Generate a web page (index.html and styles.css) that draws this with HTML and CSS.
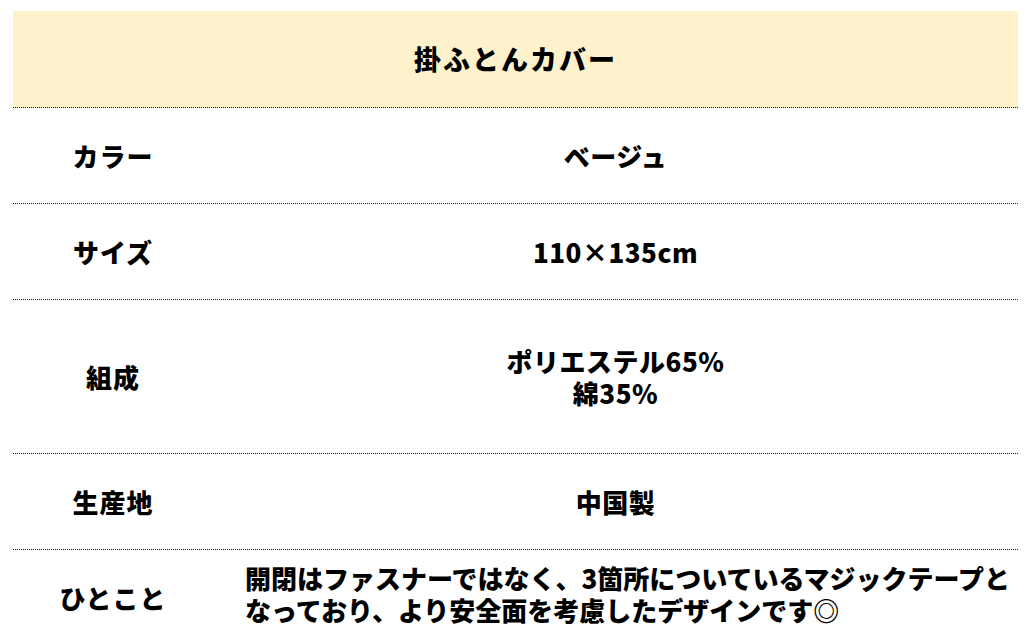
FILE: index.html
```html
<!DOCTYPE html>
<html lang="ja">
<head>
<meta charset="utf-8">
<title>掛ふとんカバー</title>
<link rel="stylesheet" href="styles.css">
</head>
<body>
<div class="page">
  <div class="spec">
    <div class="spec-head">掛ふとんカバー</div>
    <div class="spec-row">
      <div class="spec-label">カラー</div>
      <div class="spec-value">ベージュ</div>
    </div>
    <div class="spec-row">
      <div class="spec-label">サイズ</div>
      <div class="spec-value">110×135cm</div>
    </div>
    <div class="spec-row spec-row-tall">
      <div class="spec-label">組成</div>
      <div class="spec-value">ポリエステル65%<br>綿35%</div>
    </div>
    <div class="spec-row">
      <div class="spec-label">生産地</div>
      <div class="spec-value">中国製</div>
    </div>
    <div class="spec-row spec-row-last">
      <div class="spec-label">ひとこと</div>
      <div class="spec-value spec-value-left">開閉はファスナーではなく、3箇所についているマジックテープと<br>なっており、より安全面を考慮したデザインです◎</div>
    </div>
  </div>
</div>
</body>
</html>
```

FILE: styles.css
```css
html, body {
  margin: 0;
  padding: 0;
  background: #ffffff;
}

body {
  font-family: "Noto Sans CJK JP", "Noto Sans", sans-serif;
  font-weight: 900;
  color: #000000;
  font-size: 26px;
  line-height: 32px;
}

.page {
  padding: 11px 11px 0 13px;
}

.spec {
  width: 1005px;
}

.spec-head {
  background: #fef2cd;
  height: 96px;
  display: flex;
  align-items: center;
  justify-content: center;
  border-bottom: 1px dotted #1a1a1a;
  font-size: 27px;
  letter-spacing: 2px;
}

.spec-row {
  display: grid;
  grid-template-columns: 200px 1fr;
  min-height: 95px;
  border-bottom: 1px dotted #1a1a1a;
}

.spec-row-tall {
  min-height: 153px;
}

.spec-row-last {
  border-bottom: none;
}

.spec-label,
.spec-value {
  display: flex;
  align-items: center;
  justify-content: center;
  text-align: center;
}

.spec-label {
  letter-spacing: 1px;
}

.spec-value {
  letter-spacing: 0.5px;
}

.spec-value-left {
  justify-content: flex-start;
  text-align: left;
  padding: 0 0 8px 32px;
  white-space: nowrap;
  letter-spacing: 0;
}
```
